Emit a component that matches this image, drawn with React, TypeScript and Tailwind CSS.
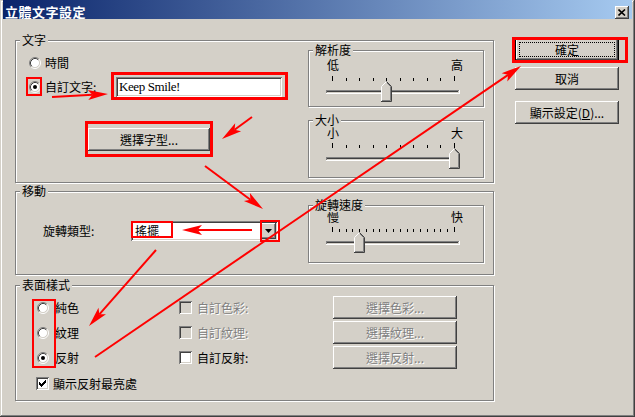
import React from "react";

const FONT = "font-['Noto_Sans_CJK_TC','Noto_Sans_CJK_SC',sans-serif]";
const raised =
  "shadow-[inset_-1px_-1px_0_#404040,inset_1px_1px_0_#fff,inset_-2px_-2px_0_#808080,inset_2px_2px_0_#d4d0c8]";
const sunken =
  "shadow-[inset_1px_1px_0_#808080,inset_-1px_-1px_0_#fff,inset_2px_2px_0_#404040,inset_-2px_-2px_0_#d4d0c8]";

function Group({
  label,
  className = "",
  children,
}: {
  label: string;
  className?: string;
  children?: React.ReactNode;
}) {
  return (
    <div
      className={`relative border border-[#808080] shadow-[inset_1px_1px_0_#fff,1px_1px_0_#fff] ${className}`}
    >
      <span className="absolute top-[-8px] left-[4px] bg-[#d4d0c8] px-[2px] text-[12px] leading-[14px] whitespace-nowrap">
        {label}
      </span>
      {children}
    </div>
  );
}

function Radio({ checked = false }: { checked?: boolean }) {
  return (
    <svg width="12" height="12" viewBox="0 0 12 12" className="shrink-0 block">
      <circle cx="6" cy="6" r="4.5" fill="#fff" />
      <path d="M2.11 9.89 A5.5 5.5 0 0 1 9.89 2.11" stroke="#808080" fill="none" />
      <path d="M9.89 2.11 A5.5 5.5 0 0 1 2.11 9.89" stroke="#ffffff" fill="none" />
      <path d="M2.82 9.18 A4.5 4.5 0 0 1 9.18 2.82" stroke="#404040" fill="none" />
      <path d="M9.18 2.82 A4.5 4.5 0 0 1 2.82 9.18" stroke="#d4d0c8" fill="none" />
      {checked && <circle cx="6" cy="6" r="2" fill="#000" />}
    </svg>
  );
}

function Check({ checked = false, disabled = false }: { checked?: boolean; disabled?: boolean }) {
  const cols = [2, 3, 4, 3, 2, 1, 0];
  return (
    <div
      className={`relative w-[13px] h-[13px] shrink-0 ${disabled ? "bg-[#d4d0c8]" : "bg-white"} ${sunken}`}
    >
      {checked && (
        <svg className="absolute left-[3px] top-[3px]" width="7" height="7" viewBox="0 0 7 7">
          {cols.map((y, i) => (
            <rect key={i} x={i} y={y} width="1" height="3" fill="#000" />
          ))}
        </svg>
      )}
    </div>
  );
}

function Btn({
  children,
  className = "",
  disabled = false,
}: {
  children: React.ReactNode;
  className?: string;
  disabled?: boolean;
}) {
  return (
    <div
      className={`flex items-center justify-center bg-[#d4d0c8] ${raised} text-[12px] leading-[14px] whitespace-nowrap ${
        disabled ? "text-[#808080] [text-shadow:1px_1px_0_#fff]" : "text-black"
      } ${className}`}
    >
      {children}
    </div>
  );
}

function SliderGroup({
  label,
  left,
  right,
  ticks,
  thumb,
  className,
  labelMt,
  svgMt,
}: {
  label: string;
  left: string;
  right: string;
  ticks: number;
  thumb: number;
  className: string;
  labelMt: string;
  svgMt: string;
}) {
  const x0 = 23;
  const x1 = 145;
  const xs = Array.from({ length: ticks }, (_, i) => Math.round(x0 + (i * (x1 - x0)) / (ticks - 1)));
  const c = xs[thumb];
  const t = 17; // track top
  const th = 8; // thumb top
  return (
    <Group label={label} className={className}>
      <div className={`flex justify-between pl-[18px] pr-[20px] h-[14px] leading-[14px] ${labelMt}`}>
        <span>{left}</span>
        <span>{right}</span>
      </div>
      <svg width="174" height="31" className={`block ${svgMt}`}>
        {xs.map((x, i) => (
          <line
            key={i}
            x1={x + 0.5}
            x2={x + 0.5}
            y1={i === 0 || i === ticks - 1 ? 3 : 5}
            y2={8}
            stroke="#000"
          />
        ))}
        {/* track */}
        <line x1="17" x2="150" y1={t + 0.5} y2={t + 0.5} stroke="#808080" />
        <line x1="18" x2="149" y1={t + 1.5} y2={t + 1.5} stroke="#404040" />
        <line x1="17" x2="151" y1={t + 3.5} y2={t + 3.5} stroke="#ffffff" />
        <line x1="150.5" x2="150.5" y1={t} y2={t + 4} stroke="#ffffff" />
        <line x1="17.5" x2="17.5" y1={t} y2={t + 3} stroke="#808080" />
        {/* thumb */}
        <polygon
          points={`${c - 5},${th + 5} ${c},${th} ${c + 6},${th + 6} ${c + 6},${th + 21} ${c - 5},${th + 21}`}
          fill="#d4d0c8"
        />
        <polyline
          points={`${c - 4.5},${th + 20.5} ${c - 4.5},${th + 5.5} ${c + 0.5},${th + 0.5}`}
          stroke="#fff"
          fill="none"
        />
        <polyline
          points={`${c + 0.5},${th + 0.5} ${c + 5.5},${th + 5.5} ${c + 5.5},${th + 20.5} ${c - 5},${th + 20.5}`}
          stroke="#404040"
          fill="none"
        />
        <polyline
          points={`${c + 1},${th + 2} ${c + 4.5},${th + 5.5} ${c + 4.5},${th + 19.5} ${c - 4},${th + 19.5}`}
          stroke="#808080"
          fill="none"
        />
      </svg>
    </Group>
  );
}

type Arrow = [number, number, number, number];

function arrowHead([x1, y1, x2, y2]: Arrow) {
  const dx = x2 - x1;
  const dy = y2 - y1;
  const len = Math.hypot(dx, dy);
  const ux = dx / len;
  const uy = dy / len;
  const nx = -uy;
  const ny = ux;
  const L = 20;
  const W = 5;
  const bx = x2 - L * ux;
  const by = y2 - L * uy;
  const mx = x2 - L * 0.78 * ux;
  const my = y2 - L * 0.78 * uy;
  return {
    pts: `${x2},${y2} ${bx + W * nx},${by + W * ny} ${mx},${my} ${bx - W * nx},${by - W * ny}`,
    ex: mx,
    ey: my,
  };
}

function Overlay() {
  const arrows: Arrow[] = [
    [52, 97, 108, 94],
    [252, 117, 222, 139],
    [205, 166, 263, 209],
    [252, 230, 182, 230],
    [156, 250, 89, 326],
    [95, 357, 521, 66],
  ];
  const boxes: [number, number, number, number, number][] = [
    [26, 77, 16, 19, 2],
    [111, 72, 177, 28, 3],
    [85, 121, 128, 36, 3],
    [131, 221, 42, 17, 2],
    [260, 220, 20, 22, 2],
    [32, 299, 24, 69, 2],
    [512, 37, 116, 26, 3],
  ];
  return (
    <svg className="absolute left-0 top-0 pointer-events-none" width="635" height="417">
      {boxes.map(([x, y, w, h, t], i) => (
        <rect
          key={i}
          x={x + t / 2}
          y={y + t / 2}
          width={w - t}
          height={h - t}
          fill="none"
          stroke="#ff0000"
          strokeWidth={t}
        />
      ))}
      {arrows.map((a, i) => {
        const h = arrowHead(a);
        return (
          <g key={i}>
            <line x1={a[0]} y1={a[1]} x2={h.ex} y2={h.ey} stroke="#ff0000" strokeWidth="2" />
            <polygon points={h.pts} fill="#ff0000" />
          </g>
        );
      })}
    </svg>
  );
}

export default function App() {
  return (
    <div
      className={`relative w-[635px] h-[417px] overflow-hidden bg-[#d4d0c8] text-black text-[12px] leading-[14px] ${FONT} shadow-[inset_-1px_-1px_0_#404040,inset_1px_1px_0_#d4d0c8,inset_-2px_-2px_0_#808080,inset_2px_2px_0_#fff] flex flex-col`}
    >
      {/* Title bar */}
      <div className="mx-[3px] h-[19px] shrink-0 bg-[linear-gradient(to_right,#0a246a,#a6caf0)] flex items-start justify-between pl-[2px] pr-[3px]">
        <span className="text-white font-bold text-[13px] leading-[15px] pt-[4px] tracking-[0.5px]">
          立體文字設定
        </span>
        <div className={`mt-[6px] w-[14px] h-[13px] bg-[#d4d0c8] ${raised} flex items-center justify-center`}>
          <svg width="8" height="7" viewBox="0 0 8 7">
            <path d="M0.5 0.5 L7 6.5 M7 0.5 L0.5 6.5" stroke="#000" strokeWidth="1.6" />
          </svg>
        </div>
      </div>

      <div className="flex flex-row">
        {/* Left column */}
        <div className="ml-[15px] mt-[21px] w-[479px] flex flex-col">
          {/* 文字 */}
          <Group label="文字" className="h-[143px] flex flex-row">
            <div className="flex-1 flex flex-col">
              <div className="flex items-center h-[14px] mt-[15px] pl-[13px]">
                <Radio />
                <span className="ml-[4px]">時間</span>
              </div>
              <div className="flex items-center h-[20px] mt-[7px] pl-[13px]">
                <Radio checked />
                <span className="ml-[4px] w-[71px]">自訂文字:</span>
                <div className={`w-[166px] h-[20px] bg-white ${sunken} flex items-center pl-[3px]`}>
                  <span className="font-['Liberation_Serif',serif] text-[13px] tracking-[-0.4px] leading-[14px]">
                    Keep Smile!
                  </span>
                </div>
              </div>
              <Btn className="mt-[31px] ml-[72px] w-[122px] h-[23px]">選擇字型...</Btn>
            </div>
            <div className="w-[176px] mr-[9px] flex flex-col">
              <SliderGroup
                label="解析度"
                left="低"
                right="高"
                ticks={10}
                thumb={4}
                className="mt-[9px] h-[57px]"
                labelMt="mt-[7px]"
                svgMt="mt-[1px]"
              />
              <SliderGroup
                label="大小"
                left="小"
                right="大"
                ticks={10}
                thumb={9}
                className="mt-[13px] h-[58px]"
                labelMt="mt-[5px]"
                svgMt="mt-0"
              />
            </div>
          </Group>

          {/* 移動 */}
          <Group label="移動" className="mt-[8px] h-[84px] flex flex-row">
            <div className="flex-1 flex flex-col">
              <div className="flex items-center h-[20px] mt-[29px] pl-[27px]">
                <span className="w-[88px]">旋轉類型:</span>
                <div className={`w-[147px] h-[20px] bg-white ${sunken} flex items-center`}>
                  <span className="flex-1 pl-[4px]">搖擺</span>
                  <div
                    className={`w-[16px] h-[16px] mr-[2px] bg-[#d4d0c8] ${raised} flex items-center justify-center`}
                  >
                    <svg width="7" height="4" viewBox="0 0 7 4">
                      <path d="M0 0 H7 L3.5 4 Z" fill="#000" />
                    </svg>
                  </div>
                </div>
              </div>
            </div>
            <div className="w-[176px] mr-[9px] flex flex-col">
              <SliderGroup
                label="旋轉速度"
                left="慢"
                right="快"
                ticks={19}
                thumb={4}
                className="mt-[13px] h-[58px]"
                labelMt="mt-[4px]"
                svgMt="mt-0"
              />
            </div>
          </Group>

          {/* 表面樣式 */}
          <Group label="表面樣式" className="mt-[10px] h-[116px] flex flex-col">
            <div className="mt-[9px] flex flex-col">
              {[
                { r: "純色", c: "自訂色彩:", b: "選擇色彩...", on: false, dis: true },
                { r: "紋理", c: "自訂紋理:", b: "選擇紋理...", on: false, dis: true },
                { r: "反射", c: "自訂反射:", b: "選擇反射...", on: true, dis: false },
              ].map((row) => (
                <div key={row.r} className="flex items-center h-[25px]">
                  <div className="w-[163px] flex items-center pl-[21px]">
                    <Radio checked={row.on} />
                    <span className="ml-[6px]">{row.r}</span>
                  </div>
                  <div className="w-[154px] flex items-center">
                    <Check disabled={row.dis} />
                    <span
                      className={`ml-[5px] ${row.dis ? "text-[#808080] [text-shadow:1px_1px_0_#fff]" : ""}`}
                    >
                      {row.c}
                    </span>
                  </div>
                  <Btn disabled className="w-[124px] h-[23px]">
                    {row.b}
                  </Btn>
                </div>
              ))}
              <div className="flex items-center h-[15px] mt-[6px] pl-[20px]">
                <Check checked />
                <span className="ml-[4px]">顯示反射最亮處</span>
              </div>
            </div>
          </Group>
        </div>

        {/* Right column */}
        <div className="ml-[21px] mt-[19px] w-[104px] flex flex-col">
          <div className="relative h-[23px] border border-black">
            <Btn className="w-full h-full">確定</Btn>
            <div className="absolute left-[3px] top-[3px] right-[3px] bottom-[3px] border border-dotted border-black" />
          </div>
          <Btn className="mt-[6px] h-[23px]">取消</Btn>
          <Btn className="mt-[11px] h-[23px]">
            顯示設定(<span className="underline">D</span>)...
          </Btn>
        </div>
      </div>

      <Overlay />
    </div>
  );
}
